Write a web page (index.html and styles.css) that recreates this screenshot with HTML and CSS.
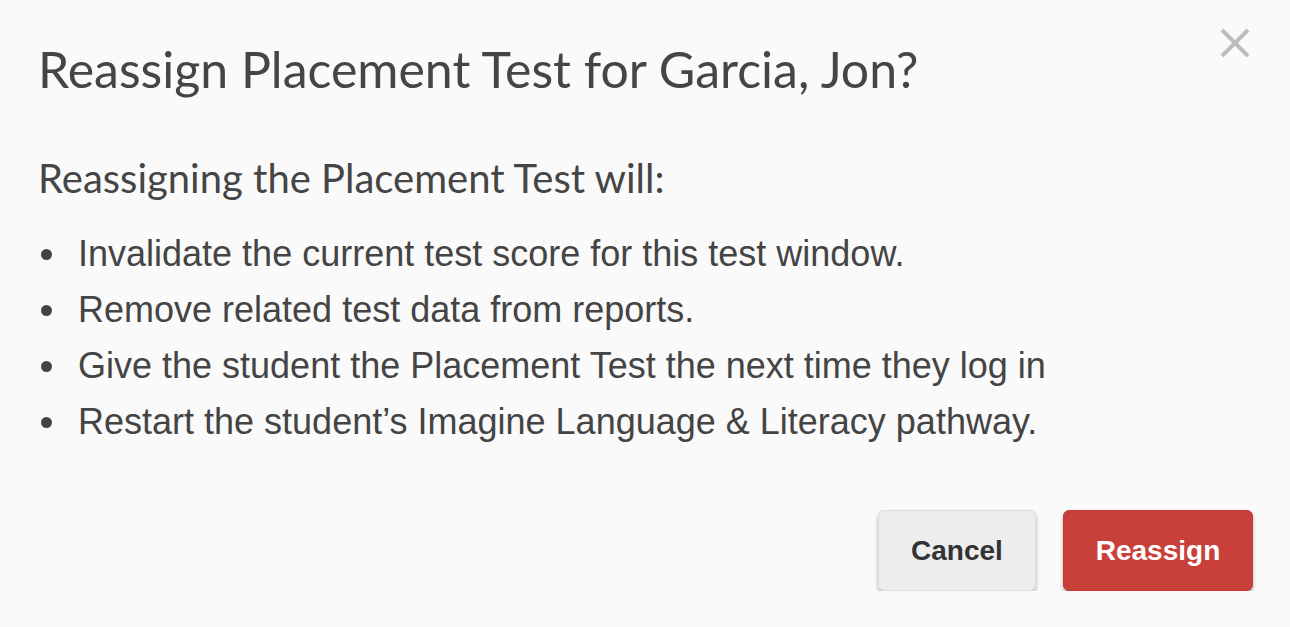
FILE: index.html
```html
<!DOCTYPE html>
<html>
<head>
    <meta charset="utf-8">
    <title>Reassign Placement Test</title>
    <link rel="stylesheet" href="styles.css">
</head>
<body>
    <div class="modal">
        <div class="modal-header">
            <h1 class="modal-title">Reassign Placement Test for Garcia, Jon?</h1>
            <button class="close-btn" aria-label="Close">
                <svg width="30" height="30" viewBox="0 0 30 30">
                    <path d="M2 2 L28 28 M28 2 L2 28" stroke="#bdbdbd" stroke-width="4"/>
                </svg>
            </button>
        </div>
        <div class="modal-body">
            <p class="lead">Reassigning the Placement Test will:</p>
            <ul class="effects">
                <li>Invalidate the current test score for this test window.</li>
                <li>Remove related test data from reports.</li>
                <li>Give the student the Placement Test the next time they log in</li>
                <li>Restart the student’s Imagine Language &amp; Literacy pathway.</li>
            </ul>
        </div>
        <div class="modal-footer">
            <button class="btn btn-cancel">Cancel</button>
            <button class="btn btn-reassign">Reassign</button>
        </div>
    </div>
</body>
</html>
```

FILE: styles.css
```css
body {
    margin: 0;
    background-color: #fafafa;
    color: #444;
}
.modal {
    padding: 0 37px 0 38px;
}
.modal-header {
    display: flex;
    justify-content: space-between;
    align-items: flex-start;
}
.modal-title {
    font-family: Lato, sans-serif;
    font-weight: normal;
    font-size: 50px;
    color: #454545;
    margin: 38px 0 0 0;
    line-height: 62px;
}
.close-btn {
    background: none;
    border: none;
    padding: 0;
    margin: 28px 3px 0 0;
    cursor: pointer;
}
.modal-body {
    margin-top: 56px;
}
.lead {
    font-family: Lato, sans-serif;
    font-size: 40px;
    margin: 0;
    line-height: 44px;
    color: #454545;
}
.effects {
    font-family: "Liberation Sans", Arial, sans-serif;
    font-size: 36px;
    margin: 26px 0 0 0;
    padding: 0;
    list-style: none;
    color: #444;
}
.effects li {
    position: relative;
    padding-left: 40px;
    line-height: 56px;
}
.effects li::before {
    content: "";
    position: absolute;
    left: 3px;
    top: 23px;
    width: 11px;
    height: 11px;
    border-radius: 50%;
    background-color: #444;
}
.modal-footer {
    display: flex;
    justify-content: flex-end;
    gap: 27px;
    margin-top: 60px;
}
.btn {
    font-family: "Liberation Sans", Arial, sans-serif;
    font-weight: bold;
    font-size: 28px;
    border-radius: 6px;
    height: 81px;
    cursor: pointer;
    box-shadow: 0 3px 4px rgba(0,0,0,0.25);
}
.btn-cancel {
    width: 158px;
    background-color: #ededed;
    border: 1px solid #dcdcdc;
    color: #333;
}
.btn-reassign {
    width: 190px;
    background-color: #c9403a;
    border: 1px solid #c23a34;
    color: #fff;
}
```
